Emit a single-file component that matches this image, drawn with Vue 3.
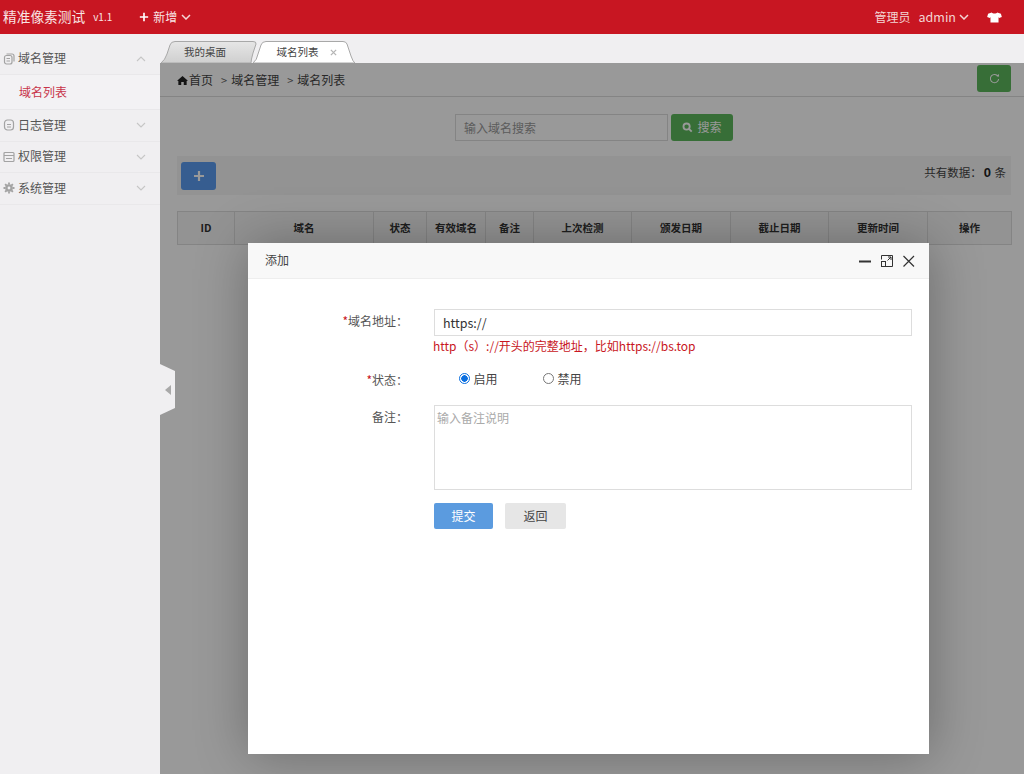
<script setup>
const menu = [
  { name: '域名管理', icon: 'doc', open: true, children: ['域名列表'] },
  { name: '日志管理', icon: 'log', open: false, children: [] },
  { name: '权限管理', icon: 'card', open: false, children: [] },
  { name: '系统管理', icon: 'gear', open: false, children: [] }
]
const columns = [
  { label: 'ID', width: 57 },
  { label: '域名', width: 139 },
  { label: '状态', width: 53 },
  { label: '有效域名', width: 59 },
  { label: '备注', width: 48 },
  { label: '上次检测', width: 98 },
  { label: '颁发日期', width: 99 },
  { label: '截止日期', width: 98 },
  { label: '更新时间', width: 99 },
  { label: '操作', width: 84 }
]
</script>

<template>
  <div class="app">
    <header class="topbar">
      <span class="brand">精准像素测试</span>
      <span class="version">v1.1</span>
      <span class="add">
        <svg class="plus" viewBox="0 0 12 12"><path d="M6 1v10M1 6h10" /></svg>
        新增
        <svg class="chev" viewBox="0 0 10 6"><path d="M1 1l4 4 4-4" /></svg>
      </span>
      <span class="spacer"></span>
      <span class="role">管理员</span>
      <span class="user">admin</span>
      <svg class="chev user-chev" viewBox="0 0 10 6"><path d="M1 1l4 4 4-4" /></svg>
      <svg class="shirt" viewBox="0 0 16 12"><path d="M5 0.5 L1 2 L0 5.5 L3 6.5 L3.6 5.5 V11.5 H12.4 V5.5 L13 6.5 L16 5.5 L15 2 L11 0.5 C10 2 6 2 5 0.5 Z" /></svg>
    </header>

    <div class="layout">
      <aside class="sidebar">
        <template v-for="item in menu" :key="item.name">
          <div class="menu-head">
            <svg class="menu-icon" viewBox="0 0 12 12">
              <g v-if="item.icon === 'doc'">
                <rect x="1.5" y="2.500" width="7.500" height="8.500" rx="2" />
                <path d="M3.500 1h5.500a2 2 0 0 1 2 2v5.500M3.500 5.500h3.500M3.500 8h3.500" />
              </g>
              <g v-else-if="item.icon === 'log'">
                <rect x="1.500" y="1" width="9" height="10" rx="3" />
                <path d="M4 5.500h4M4 8h4" />
              </g>
              <g v-else-if="item.icon === 'card'">
                <rect x="1" y="1.500" width="10" height="9" rx="1" />
                <path d="M1 4.500h10M3 7.500h6" />
              </g>
              <g v-else>
                <circle cx="6" cy="6" r="2.600" stroke-width="2.400" />
                <path stroke-width="1.800" d="M6 .5v2M6 9.500v2M.5 6h2M9.500 6h2M2.100 2.100l1.400 1.400M8.500 8.500l1.400 1.400M2.100 9.900l1.400-1.400M8.500 3.500l1.400-1.400" />
              </g>
            </svg>
            <span>{{ item.name }}</span>
            <svg class="menu-chev" viewBox="0 0 10 6">
              <path :d="item.open ? 'M1 5l4-4 4 4' : 'M1 1l4 4 4-4'" />
            </svg>
          </div>
          <div v-for="child in item.children" :key="child" class="menu-child">{{ child }}</div>
        </template>
      </aside>

      <main class="main">
        <nav class="tabs">
          <div class="tab">
            <svg class="tab-shape" viewBox="0 0 96 22" preserveAspectRatio="none">
              <defs>
                <linearGradient id="tabfill" x1="0" y1="0" x2="0" y2="1">
                  <stop offset="0" stop-color="#e6e6e6" />
                  <stop offset="1" stop-color="#cfcfcf" />
                </linearGradient>
              </defs>
              <path d="M0 22 Q4 19 6 13 L9 4 Q10 .5 14 .5 H92 Q95.500 .5 95 3 L92 12 Q90 19 90 22 Z" fill="url(#tabfill)" stroke="#a8a8a8" />
            </svg>
            <span class="tab-label">我的桌面</span>
          </div>
          <div class="tab tab-active">
            <svg class="tab-shape" viewBox="0 0 102 22" preserveAspectRatio="none">
              <path d="M0 22 Q4 19 5 13 L8 4 Q9 .5 13 .5 H90 Q93 .5 94 3 L98 15 Q100 21 102 22 Z" fill="#fff" stroke="#a8a8a8" />
            </svg>
            <span class="tab-label">域名列表</span>
            <svg class="tab-close" viewBox="0 0 8 8"><path d="M1 1l6 6M7 1l-6 6" /></svg>
          </div>
        </nav>

        <section class="frame">
          <div class="crumbs">
            <svg class="home" viewBox="0 0 12 10"><path d="M6 0 L12 5.200 L10.600 5.600 V10 H7.400 V6.600 H4.600 V10 H1.400 V5.600 L0 5.200 Z" /></svg>
            <span>首页</span>
            <span class="sep">&gt;</span>
            <span>域名管理</span>
            <span class="sep">&gt;</span>
            <span>域名列表</span>
            <span class="spacer"></span>
            <button class="refresh" type="button">
              <svg viewBox="0 0 12 12"><path d="M9.800 3.600 A4.500 4.500 0 1 0 10.500 6.500" /><path class="refresh-tip" d="M7.800 3.400 L11 4.200 L10.800 1.200 Z" /></svg>
            </button>
          </div>

          <div class="page">
            <div class="search">
              <div class="search-input">输入域名搜索</div>
              <button class="search-btn" type="button">
                <svg viewBox="0 0 12 12"><circle cx="5" cy="5" r="3.400" /><path d="M7.600 7.600l3 3" /></svg>
                搜索
              </button>
            </div>

            <div class="toolbar">
              <button class="add-btn" type="button">
                <svg viewBox="0 0 12 12"><path d="M6 1v10M1 6h10" /></svg>
              </button>
              <span class="total">共有数据：<b>0</b> 条</span>
            </div>

            <table class="grid">
              <thead>
                <tr>
                  <th v-for="c in columns" :key="c.label" :style="{ width: c.width + 'px' }">{{ c.label }}</th>
                </tr>
              </thead>
            </table>
          </div>

          <div class="shade"></div>

          <div class="handle"><i></i></div>

          <div class="modal">
            <div class="modal-head">
              <span>添加</span>
              <span class="spacer"></span>
              <svg class="win" viewBox="0 0 12 12"><path class="thick" d="M0 6.500h12" /></svg>
              <svg class="win" viewBox="0 0 12 12">
                <path d="M.5 4.500V.5H11.500V11.500H4.500M6.500 5.500L10 2M7 2h3v3" />
                <rect x=".5" y="6.500" width="4" height="5" />
              </svg>
              <svg class="win win-close" viewBox="0 0 12 12"><path d="M.5 1l10.500 10.500M11 1L.5 11.500" /></svg>
            </div>

            <form class="form" @submit.prevent>
              <div class="row">
                <label class="label"><em>*</em>域名地址：</label>
                <div class="field">
                  <input class="input" value="https://" />
                  <p class="hint">http（s）://开头的完整地址，比如https://bs.top</p>
                </div>
              </div>

              <div class="row row-status">
                <label class="label"><em>*</em>状态：</label>
                <div class="field radios">
                  <span class="radio radio-on"><i></i>启用</span>
                  <span class="radio"><i></i>禁用</span>
                </div>
              </div>

              <div class="row row-note">
                <label class="label label-note">备注：</label>
                <div class="field">
                  <textarea class="area" placeholder="输入备注说明"></textarea>
                </div>
              </div>

              <div class="row row-actions">
                <span class="label"></span>
                <div class="field actions">
                  <button class="btn btn-primary" type="button">提交</button>
                  <button class="btn btn-back" type="button">返回</button>
                </div>
              </div>
            </form>
          </div>
        </section>
      </main>
    </div>
  </div>
</template>

<style>
html, body { margin: 0; height: 100%; overflow: hidden; }
</style>

<style scoped>
.app {
  width: 1024px;
  height: 774px;
  display: flex;
  flex-direction: column;
  overflow: hidden;
  font: 12px/1.4 "Noto Sans CJK SC", "Liberation Sans", sans-serif;
  color: #333;
  background: #f0eff1;
}
.spacer { flex: 1; }

.topbar {
  height: 34px;
  flex: none;
  display: flex;
  align-items: center;
  padding: 0 22px 0 3px;
  background: #c81622;
  color: #fff;
}
.brand { font-size: 13.700px; color: #f8e4e4; }
.version { margin-left: 8px; font-size: 10px; color: #f8e4e4; }
.add { margin-left: 27px; display: flex; align-items: center; color: #f8e4e4; }
.plus { width: 10px; height: 10px; margin-right: 4px; fill: none; stroke: #fff; stroke-width: 2; }
.chev { width: 10px; height: 6px; margin-left: 4px; fill: none; stroke: #f4d6d6; stroke-width: 1.500; }
.role { color: #f3d4d4; }
.user { margin-left: 8px; color: #f3d4d4; font-size: 12.500px; }
.user-chev { margin-left: 3px; }
.shirt { width: 15px; height: 11px; margin-left: 18px; fill: #fff; }

.layout { flex: 1; display: flex; min-height: 0; }

.sidebar { width: 160px; flex: none; padding-top: 9.500px; box-sizing: border-box; }
.menu-head {
  height: 31.500px;
  display: flex;
  align-items: center;
  padding: 0 14px 0 3px;
  color: #555;
  border-bottom: 1px solid #e9e8ea;
  box-sizing: border-box;
}
.menu-icon { width: 12px; height: 12px; margin-right: 3px; fill: none; stroke: #a3a3a3; stroke-width: 1.200; }
.menu-chev { width: 10px; height: 6px; margin-left: auto; fill: none; stroke: #c6c6c6; stroke-width: 1.100; }
.menu-child {
  height: 35px;
  display: flex;
  align-items: center;
  padding: 1px 0 0 19px;
  color: #c8354a;
  background: #f3f2f4;
  border-bottom: 1px solid #e9e8ea;
  box-sizing: border-box;
}

.main { flex: 1; display: flex; flex-direction: column; min-width: 0; }

.tabs { height: 29px; flex: none; display: flex; align-items: flex-end; padding-left: 1px; box-sizing: border-box; }
.tab {
  position: relative;
  width: 96px;
  height: 22px;
  display: flex;
  align-items: center;
  justify-content: center;
  font-size: 10.500px;
  color: #444;
}
.tab-label { position: relative; padding-right: 8px; }
.tab-shape { position: absolute; inset: 0; width: 100%; height: 100%; }
.tab-active { width: 102px; margin-left: -4px; }
.tab-active .tab-label { padding-right: 13px; }
.tab-close { position: absolute; left: 77px; top: 8px; width: 7px; height: 7px; fill: none; stroke: #b5b5b5; stroke-width: 1.500; }

.frame { position: relative; flex: 1; background: #fff; min-height: 0; }

.crumbs {
  height: 34px;
  display: flex;
  align-items: center;
  padding: 2px 13px 0 17px;
  border-bottom: 1px solid #ddd;
  box-sizing: border-box;
  color: #444;
}
.home { width: 11px; height: 9px; margin-right: 1px; fill: #222; }
.sep { margin: 0 4px 0 8px; color: #666; font-size: 11px; }
.refresh {
  width: 34px;
  height: 27px;
  padding: 0;
  border: 0;
  border-radius: 3px;
  background: #5cb85c;
  display: flex;
  align-items: center;
  justify-content: center;
  margin-top: -4px;
}
.refresh svg { width: 11px; height: 11px; fill: none; stroke: #fff; stroke-width: 1.100; }
.refresh-tip { fill: #fff; stroke: none; }

.page { padding: 17px 13px 0 17px; }
.search { display: flex; justify-content: center; gap: 3px; }
.search-input {
  width: 213px;
  height: 27px;
  box-sizing: border-box;
  border: 1px solid #ddd;
  padding-left: 8px;
  line-height: 25px;
  color: #999;
  background: #fff;
}
.search-btn {
  width: 62px;
  height: 27px;
  padding: 0;
  border: 0;
  border-radius: 3px;
  background: #5cb85c;
  color: #fff;
  font: inherit;
  display: flex;
  align-items: center;
  justify-content: center;
  gap: 4px;
}
.search-btn svg { width: 11px; height: 11px; fill: none; stroke: #fff; stroke-width: 2; }

.toolbar {
  margin-top: 15px;
  height: 39px;
  box-sizing: border-box;
  display: flex;
  align-items: flex-start;
  justify-content: space-between;
  padding: 6px 5px 0 4px;
  background: #f5f5f5;
}
.add-btn {
  width: 35px;
  height: 28px;
  padding: 0;
  border: 0;
  border-radius: 3px;
  background: #5a9cf0;
  display: flex;
  align-items: center;
  justify-content: center;
}
.add-btn svg { width: 12px; height: 12px; fill: none; stroke: #fff; stroke-width: 2.200; }
.total { font-size: 11.500px; line-height: 20px; color: #444; }
.total b { font-family: "Liberation Sans", sans-serif; font-size: 13px; color: #222; margin: 0 1px 0 2px; }

.grid {
  margin-top: 16px;
  width: 834px;
  table-layout: fixed;
  border-collapse: collapse;
}
.grid th {
  height: 33px;
  padding: 0;
  border: 1px solid #ddd;
  background: #f5f5f5;
  font-size: 10.500px;
  font-weight: 700;
  color: #333;
  box-sizing: border-box;
}

.shade { position: absolute; inset: 0; background: rgba(0, 0, 0, 0.4); }

.handle {
  position: absolute;
  left: 0;
  top: 301px;
  width: 15px;
  height: 51px;
  background: #f0eff1;
  clip-path: polygon(0 0, 100% 7px, 100% 44px, 0 100%);
  display: flex;
  align-items: center;
  padding-left: 5px;
  box-sizing: border-box;
}
.handle i {
  border-style: solid;
  border-width: 5.500px 6px 5.500px 0;
  border-color: transparent #a9a9a9 transparent transparent;
}

.modal {
  position: absolute;
  left: 88px;
  top: 180px;
  width: 681px;
  height: 511px;
  background: #fff;
  box-shadow: 1px 1px 50px rgba(0, 0, 0, 0.3);
}
.modal-head {
  height: 36px;
  box-sizing: border-box;
  display: flex;
  align-items: center;
  gap: 10px;
  padding: 0 14px 0 17px;
  background: #f8f8f8;
  border-bottom: 1px solid #eee;
  color: #444;
}
.win { width: 12px; height: 12px; fill: none; stroke: #333; stroke-width: 1; }
.win-close { stroke-width: 1.200; }
.thick { stroke-width: 2; }

.form { padding-top: 30px; }
.row { display: flex; }
.label { width: 160px; flex: none; text-align: right; color: #555; padding-top: 3px; line-height: 18px; }
.label em { font-style: normal; color: #c81622; }
.field { width: 478px; margin-left: 26px; }
.input {
  display: block;
  width: 100%;
  height: 27px;
  box-sizing: border-box;
  border: 1px solid #ddd;
  padding: 0 8px;
  font: 12.500px "Noto Sans CJK SC", "Liberation Sans", sans-serif;
  color: #333;
  outline: none;
}
.hint { margin: 0 0 0 -1px; height: 20px; line-height: 20px; color: #c81622; font-size: 12px; }

.row-status { margin-top: 14px; }
.row-status .label { padding-top: 1px; }
.radios { display: flex; padding-left: 25px; box-sizing: border-box; height: 18px; align-items: center; color: #444; }
.radio { width: 84px; display: flex; align-items: center; gap: 3.500px; }
.radio i {
  width: 11px;
  height: 11px;
  box-sizing: border-box;
  border: 1px solid #777;
  border-radius: 50%;
  background: #fff;
}
.radio-on i { border-color: #0b6fe0; background: radial-gradient(circle, #0b6fe0 0 3px, #fff 3.500px); }

.row-note { margin-top: 16px; }
.area {
  display: block;
  width: 100%;
  height: 85px;
  box-sizing: border-box;
  border: 1px solid #ddd;
  padding: 3px 2px;
  font: 12px/18px "Noto Sans CJK SC", "Liberation Sans", sans-serif;
  resize: none;
  outline: none;
}
.area::placeholder { color: #aaa; }

.row-actions { margin-top: 13px; }
.actions { display: flex; gap: 12px; }
.btn {
  height: 26px;
  padding: 0;
  border: 0;
  border-radius: 2px;
  font: inherit;
}
.btn-primary { width: 59px; background: #5b9bdf; color: #fff; }
.btn-back { width: 61px; background: #e6e6e6; color: #444; }
</style>
